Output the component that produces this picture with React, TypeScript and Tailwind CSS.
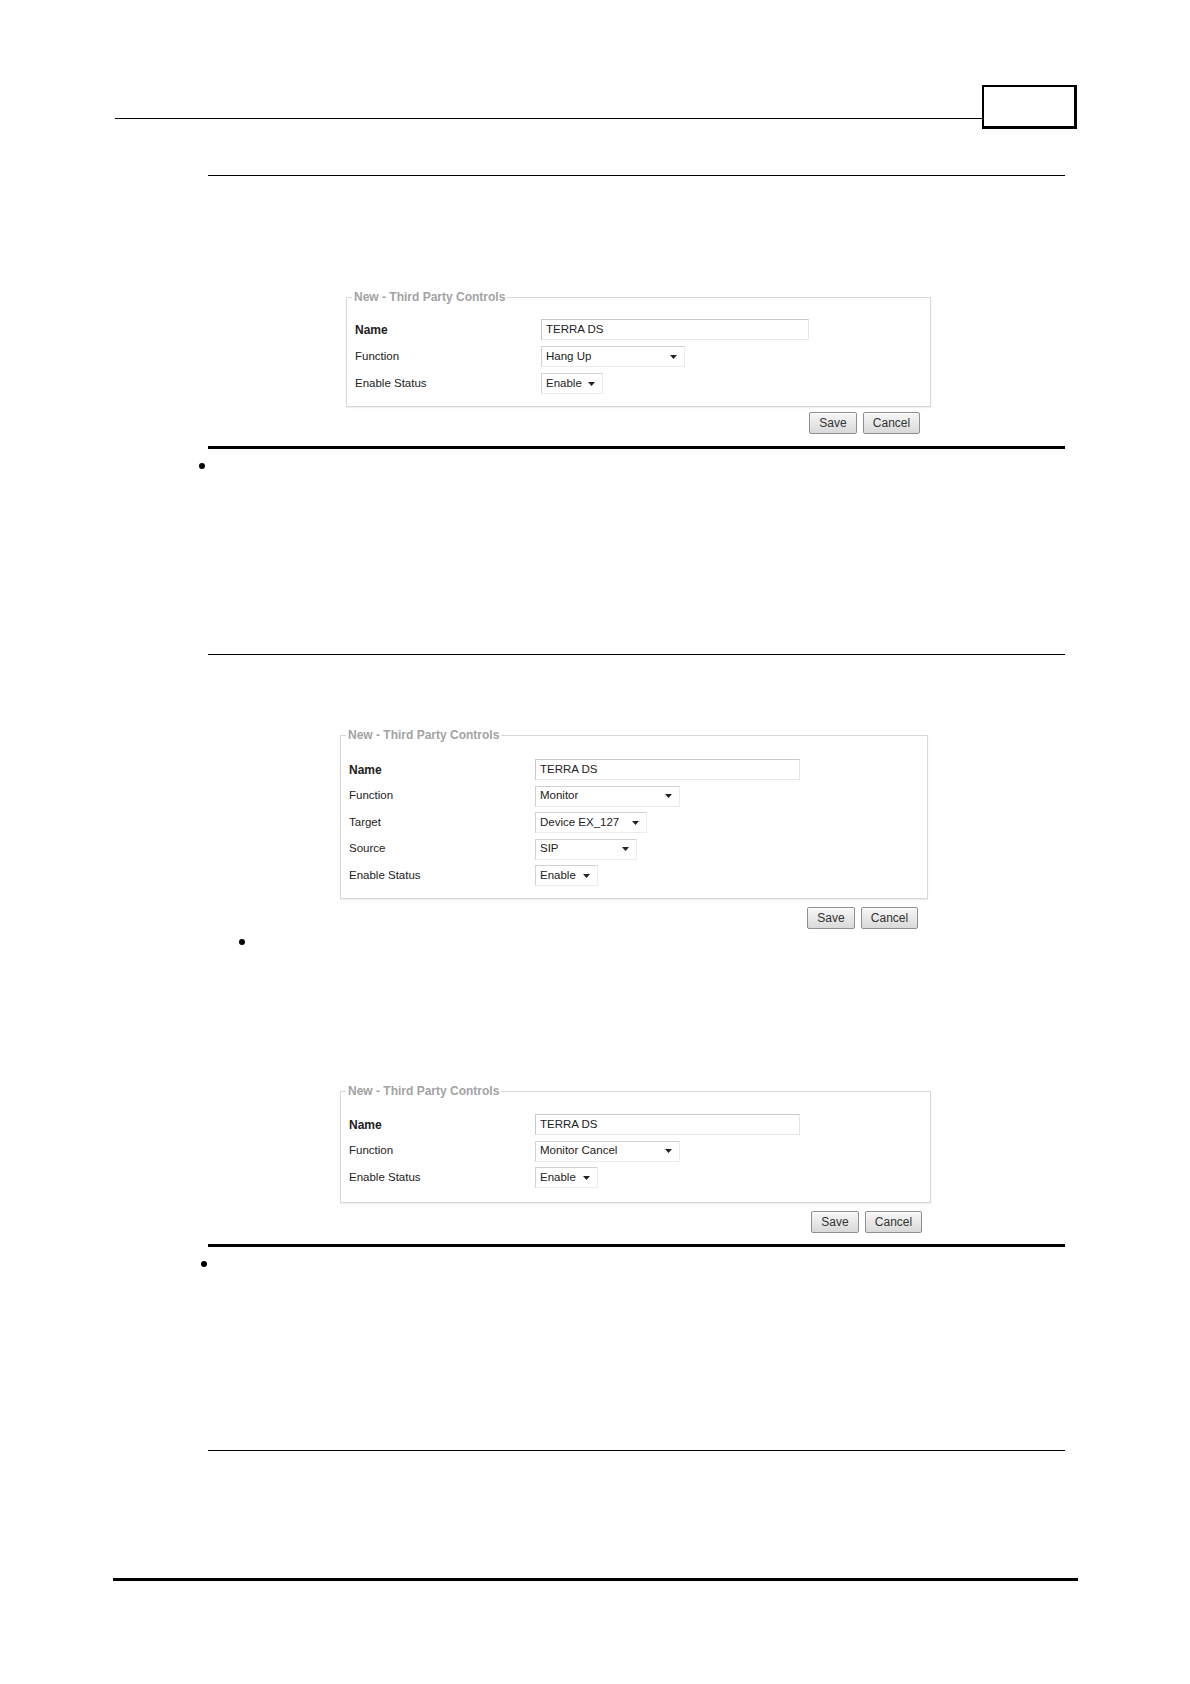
import React from "react";

// small building blocks for the "Third Party Controls" form

function TextBox({ value, className }: { value: string; className: string }) {
  return (
    <div
      className={`h-[21px] flex items-center px-[4px] bg-white border border-[#c9c9c9] border-r-[#e6e6e6] border-b-[#e6e6e6] text-[11.5px] text-[#222] ${className}`}
    >
      {value}
    </div>
  );
}

function SelectBox({ value, className }: { value: string; className: string }) {
  return (
    <div
      className={`h-[21px] flex items-center justify-between pl-[4px] pr-[7px] bg-white border border-[#d2d2d2] border-r-[#ececec] border-b-[#ececec] text-[11.5px] text-[#222] ${className}`}
    >
      <span>{value}</span>
      <svg width="7" height="4" viewBox="0 0 7 4">
        <path d="M0 0h7L3.5 4z" fill="#222" />
      </svg>
    </div>
  );
}

function Row({ label, bold, children }: { label: string; bold?: boolean; children: React.ReactNode }) {
  return (
    <div className="grid grid-cols-[186px_1fr] items-center h-[21px]">
      <span className={bold ? "text-[12px] font-bold text-[#222]" : "text-[11.5px] text-[#222]"}>{label}</span>
      <div className="flex">{children}</div>
    </div>
  );
}

function Button({ label, className }: { label: string; className: string }) {
  return (
    <button
      className={`h-[22px] rounded-[2px] border border-[#8f8f8f] bg-gradient-to-b from-[#f7f7f7] to-[#d9d9d9] text-[12px] text-[#333] shadow-[inset_0_1px_0_#fff] ${className}`}
    >
      {label}
    </button>
  );
}

function Panel({
  className,
  bodyClass,
  rowGap,
  buttonsClass,
  rows,
}: {
  className: string;
  bodyClass: string;
  rowGap: string;
  buttonsClass: string;
  rows: React.ReactNode;
}) {
  return (
    <div className={className}>
      <fieldset className="border border-[#d8d8d8] shadow-[0_1px_1px_#eee]">
        <legend className="ml-[5px] px-[2px] text-[12px] leading-[14px] font-bold text-[#a3a3a3]">
          New - Third Party Controls
        </legend>
        <div className={`flex flex-col pl-[8px] ${rowGap} ${bodyClass}`}>{rows}</div>
      </fieldset>
      <div className={`flex justify-end gap-[6px] ${buttonsClass}`}>
        <Button label="Save" className="w-[48px]" />
        <Button label="Cancel" className="w-[57px]" />
      </div>
    </div>
  );
}

export default function App() {
  return (
    <div className="w-[1190px] h-[1684px] bg-white overflow-hidden font-['Liberation_Sans',Arial,sans-serif]">
      {/* page header */}
      <div className="ml-[115px] mt-[85px] w-[962px] flex items-start">
        <div className="flex-1 h-[34px] border-b border-black" />
        <div className="w-[95px] h-[44px] border-2 border-black border-r-[3px] border-b-[3px]" />
      </div>

      <div className="ml-[208px] w-[857px] flex flex-col">
        <div className="mt-[46px] h-px bg-black" />

        {/* Hang Up */}
        <Panel
          className="mt-[114px] ml-[138px] w-[585px]"
          bodyClass="pt-[15px] pb-[12px]"
          rowGap="gap-[6px]"
          buttonsClass="mt-[5px] pr-[11px]"
          rows={
            <>
              <Row label="Name" bold>
                <TextBox value="TERRA DS" className="w-[268px]" />
              </Row>
              <Row label="Function">
                <SelectBox value="Hang Up" className="w-[144px]" />
              </Row>
              <Row label="Enable Status">
                <SelectBox value="Enable" className="w-[62px]" />
              </Row>
            </>
          }
        />

        <div className="mt-[12px] h-[3px] bg-black" />
        <div className="mt-[14px] -ml-[9px] w-[6px] h-[6px] rounded-full bg-black" />

        <div className="mt-[185px] h-px bg-black" />

        {/* Monitor */}
        <Panel
          className="mt-[73px] ml-[132px] w-[588px]"
          bodyClass="pt-[17px] pb-[12px]"
          rowGap="gap-[5.5px]"
          buttonsClass="mt-[8px] pr-[10px]"
          rows={
            <>
              <Row label="Name" bold>
                <TextBox value="TERRA DS" className="w-[265px]" />
              </Row>
              <Row label="Function">
                <SelectBox value="Monitor" className="w-[145px]" />
              </Row>
              <Row label="Target">
                <SelectBox value="Device EX_127" className="w-[112px]" />
              </Row>
              <Row label="Source">
                <SelectBox value="SIP" className="w-[102px]" />
              </Row>
              <Row label="Enable Status">
                <SelectBox value="Enable" className="w-[63px]" />
              </Row>
            </>
          }
        />

        <div className="mt-[10px] ml-[31px] w-[6px] h-[6px] rounded-full bg-black" />

        {/* Monitor Cancel */}
        <Panel
          className="mt-[139px] ml-[132px] w-[591px]"
          bodyClass="pt-[16px] pb-[14px]"
          rowGap="gap-[5.5px]"
          buttonsClass="mt-[8px] pr-[9px]"
          rows={
            <>
              <Row label="Name" bold>
                <TextBox value="TERRA DS" className="w-[265px]" />
              </Row>
              <Row label="Function">
                <SelectBox value="Monitor Cancel" className="w-[145px]" />
              </Row>
              <Row label="Enable Status">
                <SelectBox value="Enable" className="w-[63px]" />
              </Row>
            </>
          }
        />

        <div className="mt-[11px] h-[3px] bg-black" />
        <div className="mt-[14px] -ml-[7px] w-[6px] h-[6px] rounded-full bg-black" />

        <div className="mt-[183px] h-px bg-black" />
      </div>

      {/* page footer */}
      <div className="mt-[127px] ml-[113px] w-[965px] h-[3px] bg-black" />
    </div>
  );
}
